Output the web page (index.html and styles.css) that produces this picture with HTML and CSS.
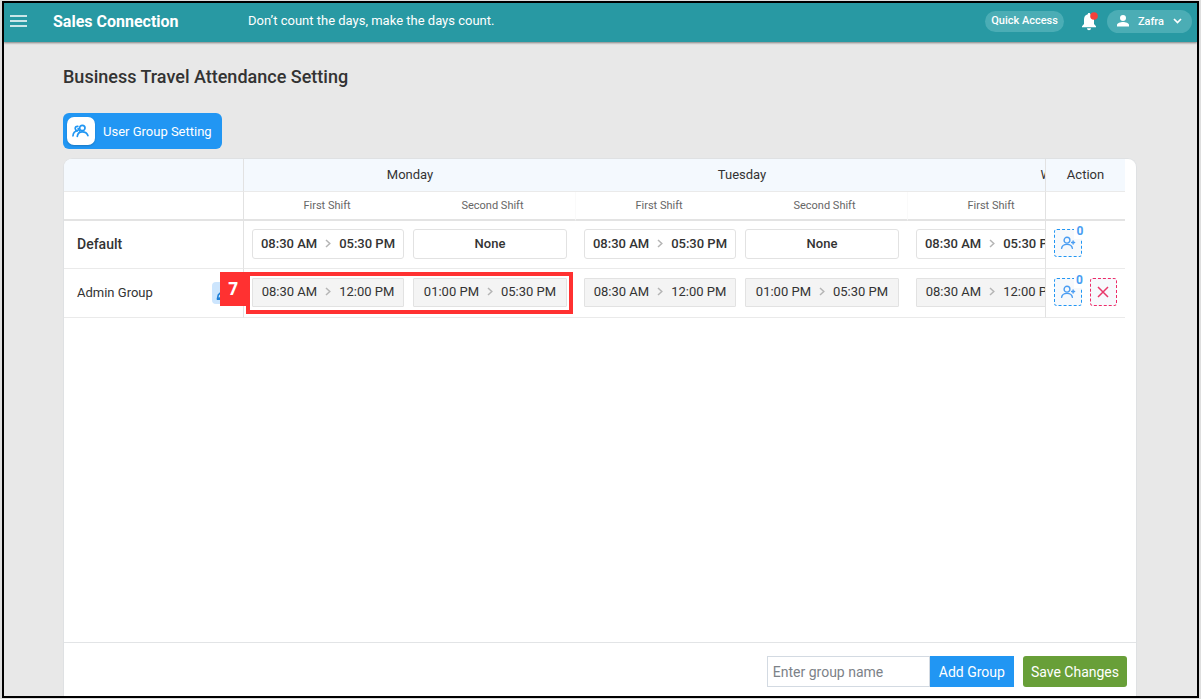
FILE: index.html
```
<!DOCTYPE html>
<html lang="en">
<head>
<meta charset="utf-8">
<meta name="viewport" content="width=device-width, initial-scale=1">
<title>Business Travel Attendance Setting</title>
<link rel="stylesheet" href="styles.css">
</head>
<body>
<svg class="sprite" aria-hidden="true">
  <symbol id="chev" viewBox="0 0 6 9"><path d="M1 1l3.800 3.500L1 8" fill="none" stroke="#b5b5b5" stroke-width="1.500"/></symbol>
  <symbol id="add-user" viewBox="0 0 16 14"><g fill="none" stroke="#4a9df2" stroke-width="1.400" stroke-linecap="round"><circle cx="7" cy="4.200" r="2.900"/><path d="M1.600 12.400C2 9.800 4 8.400 7 8.400s5 1.400 5.400 4M11.600 6.500h3M13.100 5v3"/></g></symbol>
</svg>
<div class="app">
  <header class="topbar">
    <button class="icon-button" type="button" aria-label="Menu">
      <svg width="17" height="12" viewBox="0 0 17 12"><path d="M0 1h17M0 6h17M0 11h17" stroke="#fff" stroke-width="1.600"/></svg>
    </button>
    <div class="brand">Sales Connection</div>
    <div class="quote">Don’t count the days, make the days count.</div>
    <div class="tools">
      <button class="pill" type="button">Quick Access</button>
      <button class="icon-button" type="button" aria-label="Notifications">
        <svg width="17" height="19" viewBox="0 0 17 19"><path d="M8 1c-.8 0-1.200.5-1.200 1.200C4.300 2.800 3 4.800 3 7.500V12L1 14.300v.9h14v-.9L13 12V7.500C13 4.800 11.700 2.800 9.200 2.200 9.200 1.500 8.800 1 8 1zM6 16.200h4c0 1.200-.9 2-2 2s-2-.8-2-2z" fill="#fff"/><circle cx="13" cy="4" r="3.800" fill="#f5403a"/></svg>
      </button>
      <button class="pill user" type="button">
        <svg width="12" height="12" viewBox="0 0 12 12" fill="#fff"><circle cx="6" cy="3" r="3"/><path d="M0 11.500V10c0-2 3.500-3 6-3s6 1 6 3v1.500z"/></svg>
        Zafra
        <svg width="9" height="6" viewBox="0 0 9 6"><path d="M1 1l3.500 3.500L8 1" fill="none" stroke="#fff" stroke-width="1.700"/></svg>
      </button>
    </div>
  </header>
  <main class="page">
    <h1>Business Travel Attendance Setting</h1>
    <button class="group-setting" type="button">
      <span class="tile"><svg width="18" height="14" viewBox="0 0 18 14" fill="none" stroke="#2196f3" stroke-width="1.700" stroke-linecap="round"><circle cx="10.300" cy="4" r="2.700"/><path d="M5.300 12.400c.3-3 2-4.600 5-4.600s4.800 1.300 5.600 3.800M5.800 2.400C4.300 2.200 3.200 3 3.200 4.400c0 1 .7 1.900 1.900 2.200M1 11.800C1.200 9 2.700 7.200 5.300 7M6.200 4.600c.1.900.5 1.500 1.200 2.100"/></svg></span>
      User Group Setting
    </button>
    <section class="panel">
      <div class="scroller">
        <table>
          <colgroup><col class="c-name"><col class="c-shift"><col class="c-shift"><col class="c-shift"><col class="c-shift"><col class="c-shift"><col class="c-shift"><col class="c-action"></colgroup>
          <thead>
            <tr class="days"><td class="name"></td><th colspan="2">Monday</th><th colspan="2">Tuesday</th><th colspan="2">Wednesday</th><th class="action">Action</th></tr>
            <tr class="shifts"><td class="name"></td><th>First Shift</th><th class="last">Second Shift</th><th>First Shift</th><th class="last">Second Shift</th><th>First Shift</th><th class="last">Second Shift</th><td class="action"></td></tr>
          </thead>
          <tbody>
            <tr class="default">
              <th class="name" scope="row">Default</th>
              <td class="first"><button class="slot" type="button">08:30 AM <svg><use href="#chev"/></svg> 05:30 PM</button></td>
              <td class="second"><button class="slot" type="button">None</button></td>
              <td class="first"><button class="slot" type="button">08:30 AM <svg><use href="#chev"/></svg> 05:30 PM</button></td>
              <td class="second"><button class="slot" type="button">None</button></td>
              <td class="first"><button class="slot" type="button">08:30 AM <svg><use href="#chev"/></svg> 05:30 PM</button></td>
              <td class="second"><button class="slot" type="button">None</button></td>
              <td class="action"><div class="actions"><button class="act" type="button" aria-label="Assign users"><svg width="16" height="14"><use href="#add-user"/></svg><span class="count">0</span></button></div></td>
            </tr>
            <tr class="group">
              <th class="name" scope="row"><div class="name-row">Admin Group <button class="edit" type="button" aria-label="Edit group"><svg width="14" height="14" viewBox="0 0 14 14" fill="none" stroke="#1f7fd6" stroke-width="1.500"><path d="M1.500 12.500l.8-3.500L9.500 1.800l2.700 2.700L5 11.700zM1 13.300h6"/></svg></button></div></th>
              <td class="first marked"><button class="slot" type="button">08:30 AM <svg><use href="#chev"/></svg> 12:00 PM</button><div class="callout"><span class="step">7</span></div></td>
              <td class="second"><button class="slot" type="button">01:00 PM <svg><use href="#chev"/></svg> 05:30 PM</button></td>
              <td class="first"><button class="slot" type="button">08:30 AM <svg><use href="#chev"/></svg> 12:00 PM</button></td>
              <td class="second"><button class="slot" type="button">01:00 PM <svg><use href="#chev"/></svg> 05:30 PM</button></td>
              <td class="first"><button class="slot" type="button">08:30 AM <svg><use href="#chev"/></svg> 12:00 PM</button></td>
              <td class="second"><button class="slot" type="button">01:00 PM <svg><use href="#chev"/></svg> 05:30 PM</button></td>
              <td class="action"><div class="actions"><button class="act" type="button" aria-label="Assign users"><svg width="16" height="14"><use href="#add-user"/></svg><span class="count">0</span></button><button class="act remove" type="button" aria-label="Delete group"><svg width="12" height="12" viewBox="0 0 12 12"><path d="M1 1l10 10M11 1L1 11" stroke="#e8386a" stroke-width="1.500"/></svg></button></div></td>
            </tr>
          </tbody>
        </table>
      </div>
      <form class="footer">
        <div class="add">
          <input type="text" aria-label="Group name" placeholder="Enter group name">
          <button class="add-button" type="button">Add Group</button>
        </div>
        <button class="save" type="button">Save Changes</button>
      </form>
    </section>
  </main>
</div>
</body>
</html>
```
FILE: styles.css
```
* { box-sizing: border-box; }
body { margin: 0; padding: 1px 2px; background: #dedede; font-family: Roboto, "Liberation Sans", sans-serif; font-size: 13px; color: #333; }
button, input { font: inherit; margin: 0; padding: 0; border: 0; color: inherit; }
button { background: none; cursor: pointer; }
svg { flex: none; display: block; }
.sprite { position: absolute; width: 0; height: 0; }

.app { display: flex; flex-direction: column; height: calc(100vh - 2px); border: 2px solid #000; background: #e8e8e8; }
.topbar { display: flex; flex: none; align-items: center; height: 39px; padding: 0 5px 3px 6px; background: #2899a3; color: #fff; box-shadow: 0 1px 2px rgba(0, 0, 0, .45); z-index: 1; }
.brand { width: 195px; margin-left: 26px; font-size: 16px; font-weight: 700; }
.quote { flex: 1; padding-bottom: 2px; }
.tools { display: flex; align-items: center; }
.pill { height: 21px; margin-right: 17px; padding: 0 6px 2px; border-radius: 12px; background: #4badb5; font-size: 11px; font-weight: 500; }
.user { display: flex; align-items: center; gap: 9px; height: 23px; margin: 0 0 0 9px; padding: 0 10px; }

.page { display: flex; flex: 1; flex-direction: column; align-items: flex-start; min-height: 0; padding: 24px 60px 0 59px; }
h1 { margin: 0 0 26px; font-size: 18px; line-height: 21px; font-weight: 500; }
.group-setting { display: flex; flex: none; align-items: center; gap: 8px; height: 36px; margin-bottom: 9px; padding: 0 10px 0 4px; border-radius: 6px; background: #2196f3; color: #fff; }
.tile { display: grid; place-items: center; width: 28px; height: 28px; border-radius: 7px; background: #fff; box-shadow: 0 1px 2px rgba(0, 0, 0, .2); }

.panel { display: flex; flex: 1; flex-direction: column; align-self: stretch; min-height: 0; border: 1px solid #dfe1e3; border-bottom: 0; border-radius: 9px 9px 0 0; background: #fff; overflow: hidden; }
.scroller { flex: 1; margin-right: 11px; overflow: auto; scrollbar-width: none; }
table { width: 1256px; table-layout: fixed; border-collapse: separate; border-spacing: 0; }
.c-name { width: 180px; }
.c-shift { width: 166px; }
.c-action { width: 80px; }
th, td { padding: 0; border-bottom: 1px solid #eaeaea; background: #fff; font-weight: 400; }
.days > * { height: 33px; padding-bottom: 2px; background: #f4f9fe; }
.shifts > * { height: 29px; border-bottom: 2px solid #e3e3e3; font-size: 11px; color: #666; }
.shifts .last { border-right: 1px solid #fafafa; }
.default > * { height: 48px; padding-bottom: 2px; font-weight: 500; }
.group > * { height: 49px; padding-bottom: 1px; }
.name { position: sticky; left: 0; z-index: 2; padding-left: 13px; border-right: 1px solid #e2e2e2; text-align: left; }
.default .name { font-size: 14px; }
.name-row { display: flex; align-items: center; justify-content: space-between; padding-right: 5px; }
.edit { display: grid; place-items: center; width: 26px; height: 22px; padding-right: 4px; border-radius: 4px; background: #cce5fd; }
.first { padding-left: 8px; padding-right: 6px; }
.second { padding-left: 3px; padding-right: 9px; }
.slot { display: flex; align-items: center; justify-content: center; gap: 8px; width: 100%; height: 30px; border: 1px solid #e2e2e2; border-radius: 3px; white-space: nowrap; }
.slot svg { width: 6px; height: 9px; }
.group .slot { height: 29px; padding-bottom: 2px; border-radius: 1px; background: #f4f4f4; }
.action { position: sticky; right: 0; z-index: 3; border-left: 1px solid #e2e2e2; }
.actions { display: flex; gap: 8px; padding: 0 8px; }
.act { position: relative; display: grid; place-items: center; width: 28px; height: 28px; border: 1px dashed #2196f3; border-radius: 3px; background: #f7f9fc; }
.default .actions { padding-bottom: 2px; }
.group .actions { padding-bottom: 1px; }
.remove { border-color: #ed2b68; }
.count { position: absolute; top: -5px; right: -5px; width: 12px; height: 14px; background: #fff; color: #4a9df2; font-size: 12px; line-height: 12px; font-weight: 700; }

.marked { position: relative; z-index: 2; }
.callout { position: absolute; top: 3px; left: 2px; z-index: 4; width: 327px; height: 42px; border: 4px solid #ff3131; pointer-events: none; }
.step { position: absolute; top: -4px; right: calc(100% + 4px); width: 26px; height: 34px; background: #ff3131; color: #fff; font: 700 17px/34px "Open Sans", sans-serif; text-align: center; }

.footer { display: flex; flex: none; justify-content: flex-end; gap: 9px; padding: 13px 9px 9px; border-top: 1px solid #e2e4e6; font-size: 14px; }
.add { display: flex; height: 31px; }
.add input { width: 163px; padding: 0 5px; border: 1px solid #d3dae2; }
.add input::placeholder { color: #7c8288; opacity: 1; }
.add-button { padding: 0 9px; background: #2196f3; color: #fff; }
.save { height: 31px; padding: 0 8px; border-radius: 3px; background: #689f38; color: #fff; }
```
